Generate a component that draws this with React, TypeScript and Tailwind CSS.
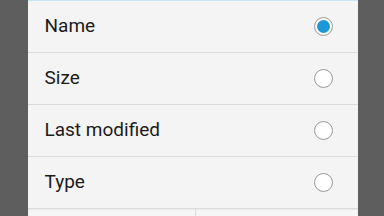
const options = [
  { label: "Name", selected: true },
  { label: "Size", selected: false },
  { label: "Last modified", selected: false },
  { label: "Type", selected: false },
];

function Radio({ selected }: { selected: boolean }) {
  return (
    <div className="w-[19px] h-[19px] rounded-full border border-[#9c9c9c] bg-white flex items-center justify-center shadow-[inset_0_0_1px_rgba(0,0,0,0.15)]">
      {selected && <div className="w-[13px] h-[13px] rounded-full bg-[#1c98d4]" />}
    </div>
  );
}

export default function App() {
  return (
    <div className="w-[384px] h-[216px] bg-[#5e5e5e] overflow-hidden flex justify-center">
      <div className="w-[330px] ml-[1px] bg-[#f4f4f4] flex flex-col" style={{ fontFamily: "Roboto, 'Noto Sans', sans-serif" }}>
        <div className="h-[1px] bg-[#c9e8f6]" />
        {options.map((o) => (
          <div
            key={o.label}
            className="h-[52px] shrink-0 flex items-center justify-between pl-[17px] pr-[25px] border-b border-[#dcdcdc]"
          >
            <span className="text-[19px] text-[#1b1b1b]">{o.label}</span>
            <Radio selected={o.selected} />
          </div>
        ))}
        <div className="flex-1 flex bg-[#f6f6f6] shadow-[inset_0_1px_2px_rgba(0,0,0,0.06)]">
          <div className="w-[168px] border-r border-[#dcdcdc]" />
          <div className="flex-1" />
        </div>
      </div>
    </div>
  );
}
